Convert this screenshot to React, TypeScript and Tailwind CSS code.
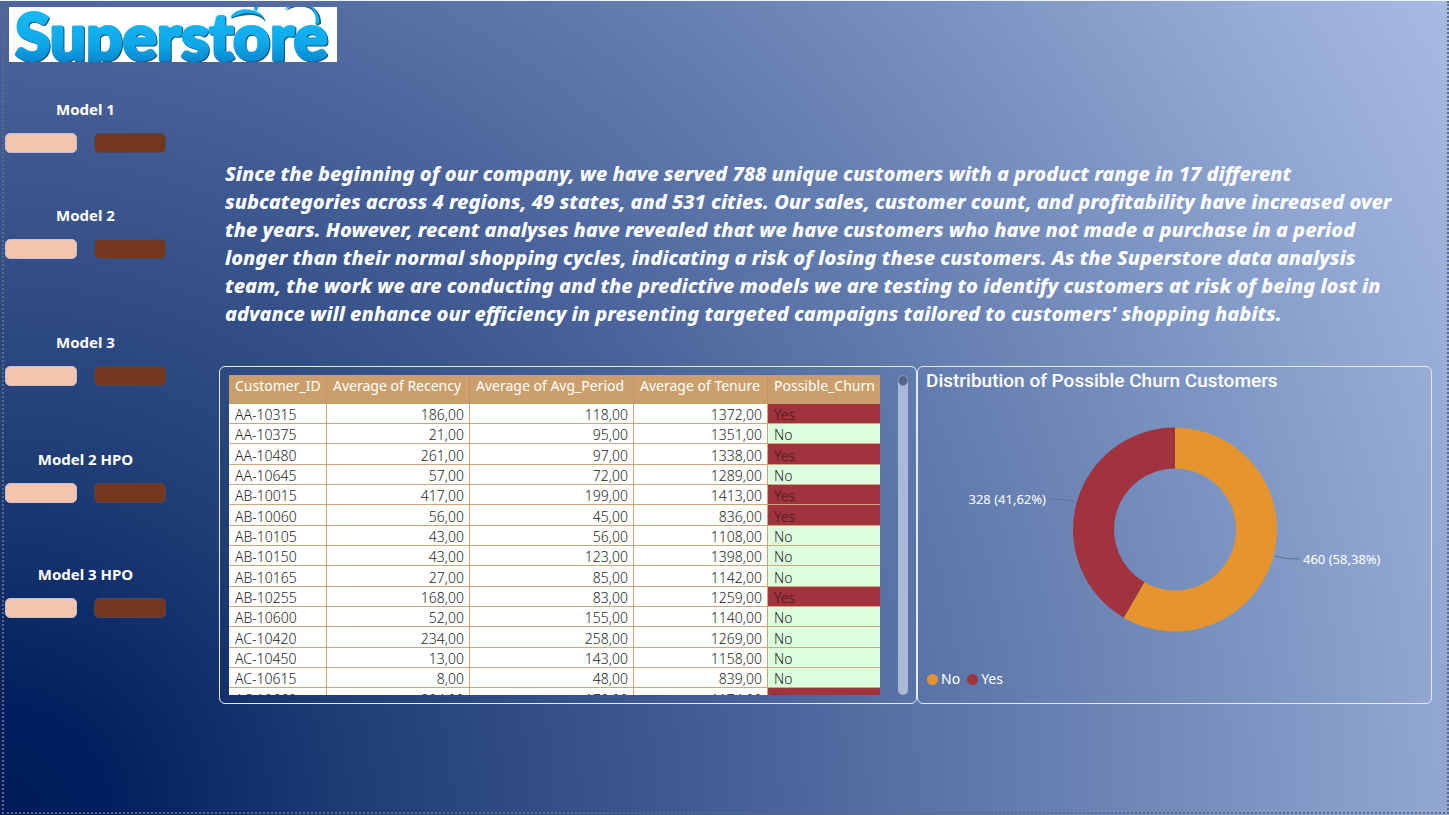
type Row = { id: string; recency: string; period: string; tenure: string; churn: 'Yes' | 'No' };

const rows: Row[] = [
  { id: 'AA-10315', recency: '186,00', period: '118,00', tenure: '1372,00', churn: 'Yes' },
  { id: 'AA-10375', recency: '21,00', period: '95,00', tenure: '1351,00', churn: 'No' },
  { id: 'AA-10480', recency: '261,00', period: '97,00', tenure: '1338,00', churn: 'Yes' },
  { id: 'AA-10645', recency: '57,00', period: '72,00', tenure: '1289,00', churn: 'No' },
  { id: 'AB-10015', recency: '417,00', period: '199,00', tenure: '1413,00', churn: 'Yes' },
  { id: 'AB-10060', recency: '56,00', period: '45,00', tenure: '836,00', churn: 'Yes' },
  { id: 'AB-10105', recency: '43,00', period: '56,00', tenure: '1108,00', churn: 'No' },
  { id: 'AB-10150', recency: '43,00', period: '123,00', tenure: '1398,00', churn: 'No' },
  { id: 'AB-10165', recency: '27,00', period: '85,00', tenure: '1142,00', churn: 'No' },
  { id: 'AB-10255', recency: '168,00', period: '83,00', tenure: '1259,00', churn: 'Yes' },
  { id: 'AB-10600', recency: '52,00', period: '155,00', tenure: '1140,00', churn: 'No' },
  { id: 'AC-10420', recency: '234,00', period: '258,00', tenure: '1269,00', churn: 'No' },
  { id: 'AC-10450', recency: '13,00', period: '143,00', tenure: '1158,00', churn: 'No' },
  { id: 'AC-10615', recency: '8,00', period: '48,00', tenure: '839,00', churn: 'No' },
  { id: 'AC-10660', recency: '204,00', period: '170,00', tenure: '1174,00', churn: 'Yes' },
];

const models = [
  { name: 'Model 1', space: 'mt-0' },
  { name: 'Model 2', space: 'mt-[52px]' },
  { name: 'Model 3', space: 'mt-[73px]' },
  { name: 'Model 2 HPO', space: 'mt-[63px]' },
  { name: 'Model 3 HPO', space: 'mt-[61px]' },
];

function Logo() {
  return (
    <svg className="block h-[55px] w-[328px] bg-white" viewBox="0 0 328 55" role="img" aria-label="Superstore">
      <defs>
        <linearGradient id="logoFill" x1="0" y1="0" x2="0" y2="1">
          <stop offset="0.2" stopColor="#17b9f4" />
          <stop offset="0.6" stopColor="#0fa9ea" />
          <stop offset="0.9" stopColor="#067fc9" />
        </linearGradient>
      </defs>
      <g fill="#12678f">
        <path d="M222 12C226 4 236 2 244 4c7 1 11 5 13 11-5-5-9-7-15-7-7 0-13 1-20 4Z" />
        <path d="M277 4c4-5 8-7 13-7 12-1 23 7 22 20l-5 2c2-9-2-16-8-18-9-3-15-1-22 3Z" />
      </g>
      <g fill="#19b4ee">
        <path d="M221 11C225 3 234 1 243 3c6 1 10 4 12 8-4-3-9-5-15-5-7 0-12 2-19 5Z" />
        <path d="M245-1h5l-2 5-3-1ZM275 3c4-5 8-7 13-7 12-1 23 7 22 20l-4 1c2-9-1-16-7-18-9-3-17 0-24 4Z" />
      </g>
      <text
        x="6"
        y="53"
        fill="url(#logoFill)"
        stroke="url(#logoFill)"
        strokeWidth="3"
        strokeLinejoin="round"
        className="font-['Lato',sans-serif] text-[64px] font-black drop-shadow-[1px_1px_0px_#17506f]"
      >
        Superstore
      </text>
    </svg>
  );
}

function ModelGroup({ name, space }: { name: string; space: string }) {
  return (
    <section className={`${space} w-[161px]`}>
      <h2 className="text-center text-[15px] leading-5 font-bold">{name}</h2>
      <div className="mt-[14px] flex justify-between">
        <button type="button" aria-label={`${name} overview`} className="h-5 w-[72px] rounded-[5px] border border-[#c3bfd6] bg-[#f5c4ad]" />
        <button type="button" aria-label={`${name} details`} className="h-5 w-[72px] rounded-[5px] border border-[#4c4a5f] bg-[#74361c]" />
      </div>
    </section>
  );
}

function CustomerTable() {
  const head = 'border-r border-[#c3945f] px-[6px] pt-[2px] align-top font-normal whitespace-nowrap last:border-r-0';
  const num = 'border-r border-b border-[#cfa57a] bg-white px-[5px] pt-[2px] text-right';
  return (
    <section className="flex h-[338px] w-[698px] shrink-0 justify-between rounded-md border border-[#e4ebf8] py-2 pr-2 pl-[9px]">
      <div className="h-80 overflow-hidden">
        <table className="w-[651px] table-fixed border-separate border-spacing-0 text-[14px] leading-[17px]">
          <colgroup>
            <col className="w-[98px]" />
            <col className="w-[143px]" />
            <col className="w-[164px]" />
            <col className="w-[134px]" />
            <col className="w-[112px]" />
          </colgroup>
          <thead>
            <tr className="h-[29px] bg-[#cb9f6b] text-left text-white">
              <th className={head}>Customer_ID</th>
              <th className={head}>Average of Recency</th>
              <th className={head}>Average of Avg_Period</th>
              <th className={head}>Average of Tenure</th>
              <th className={head}>Possible_Churn</th>
            </tr>
          </thead>
          <tbody className="font-[350] text-[#252423]">
            {rows.map((r) => (
              <tr key={r.id} className="h-5 nth-[3n]:h-[21px]">
                <td className="border-r border-b border-[#cfa57a] bg-white px-[6px] pt-[2px]">{r.id}</td>
                <td className={num}>{r.recency}</td>
                <td className={num}>{r.period}</td>
                <td className={num}>{r.tenure}</td>
                <td className={`border-b border-[#cfa57a] px-[6px] pt-[2px] ${r.churn === 'Yes' ? 'bg-[#a0333d] text-[#3f1a1e]' : 'bg-[#ddffdf]'}`}>
                  {r.churn}
                </td>
              </tr>
            ))}
          </tbody>
        </table>
      </div>
      <div className="h-80 w-[10px] rounded-full bg-[#abb9d8]">
        <div className="h-[11px] w-[10px] rounded-full border border-[#7d8db3] bg-[#566488]" />
      </div>
    </section>
  );
}

function ChurnChart() {
  return (
    <section className="flex h-[338px] min-w-0 flex-1 flex-col rounded-md border border-[#e4ebf8] px-2">
      <h2 className="mt-[3px] font-['Roboto',sans-serif] text-[19px] leading-[22px] font-medium">
        Distribution of Possible Churn Customers
      </h2>
      <svg className="mx-auto mt-5 h-56 w-[440px]" viewBox="0 0 440 224" role="img" aria-label="No 460, Yes 328">
        <path d="M220 15.500a102 102 0 1 1-51.300 190.160l20.620-35.466A61 61 0 1 0 220 56.500Z" fill="#e5942e" />
        <path d="M220 15.500a102 102 0 0 0-51.300 190.160l20.620-35.466A61 61 0 0 1 220 56.500Z" fill="#a0333d" />
        <path d="M95 87q15 0 24 3M320 144q9 3 25 3" fill="none" stroke="#5f7093" />
        <g className="text-[13px]" fill="#fff">
          <text x="91" y="92" textAnchor="end">328 (41,62%)</text>
          <text x="348" y="152">460 (58,38%)</text>
        </g>
      </svg>
      <ul className="mt-auto mb-[14px] ml-px flex gap-[7px] text-[14px] leading-5">
        <li className="flex items-center gap-[3px]">
          <span className="h-[11px] w-[11px] rounded-full bg-[#e5942e]" />
          No
        </li>
        <li className="flex items-center gap-[3px]">
          <span className="h-[11px] w-[11px] rounded-full bg-[#a0333d]" />
          Yes
        </li>
      </ul>
    </section>
  );
}

export default function App() {
  return (
    <div className="min-h-screen border-t border-[#eef3f8] bg-[radial-gradient(circle_farthest-corner_at_0%_100%,#001b5a_0%,#001e5d_6%,#1f3c75_21%,#38538a_36%,#4c669d_48%,#5770a5_54%,#738cbb_71%,#90a6d1_86%,#a7bae3_100%)] pl-[2px] font-['Noto_Sans',sans-serif] text-white">
      <div className="flex min-h-[813px] flex-col border-r-2 border-b-2 border-l-2 border-dotted border-[#5c6b80] pt-[6px]">
        <header className="pl-[5px]">
          <Logo />
        </header>
        <div className="flex pr-[15px] pl-px">
          <aside className="w-[214px] shrink-0 pt-[37px]">
            {models.map((m) => (
              <ModelGroup key={m.name} name={m.name} space={m.space} />
            ))}
          </aside>
          <main className="min-w-0 flex-1 pt-[98px]">
            <p className="pl-[6px] text-[20px] leading-[28px] font-[850] italic">
              Since the beginning of our company, we have served 788 unique customers with a product range in 17 different
              <br />
              subcategories across 4 regions, 49 states, and 531 cities. Our sales, customer count, and profitability have increased over
              <br />
              the years. However, recent analyses have revealed that we have customers who have not made a purchase in a period
              <br />
              longer than their normal shopping cycles, indicating a risk of losing these customers. As the Superstore data analysis
              <br />
              team, the work we are conducting and the predictive models we are testing to identify customers at risk of being lost in
              <br />
              advance will enhance our efficiency in presenting targeted campaigns tailored to customers' shopping habits.
            </p>
            <div className="mt-[38px] flex">
              <CustomerTable />
              <ChurnChart />
            </div>
          </main>
        </div>
      </div>
    </div>
  );
}
